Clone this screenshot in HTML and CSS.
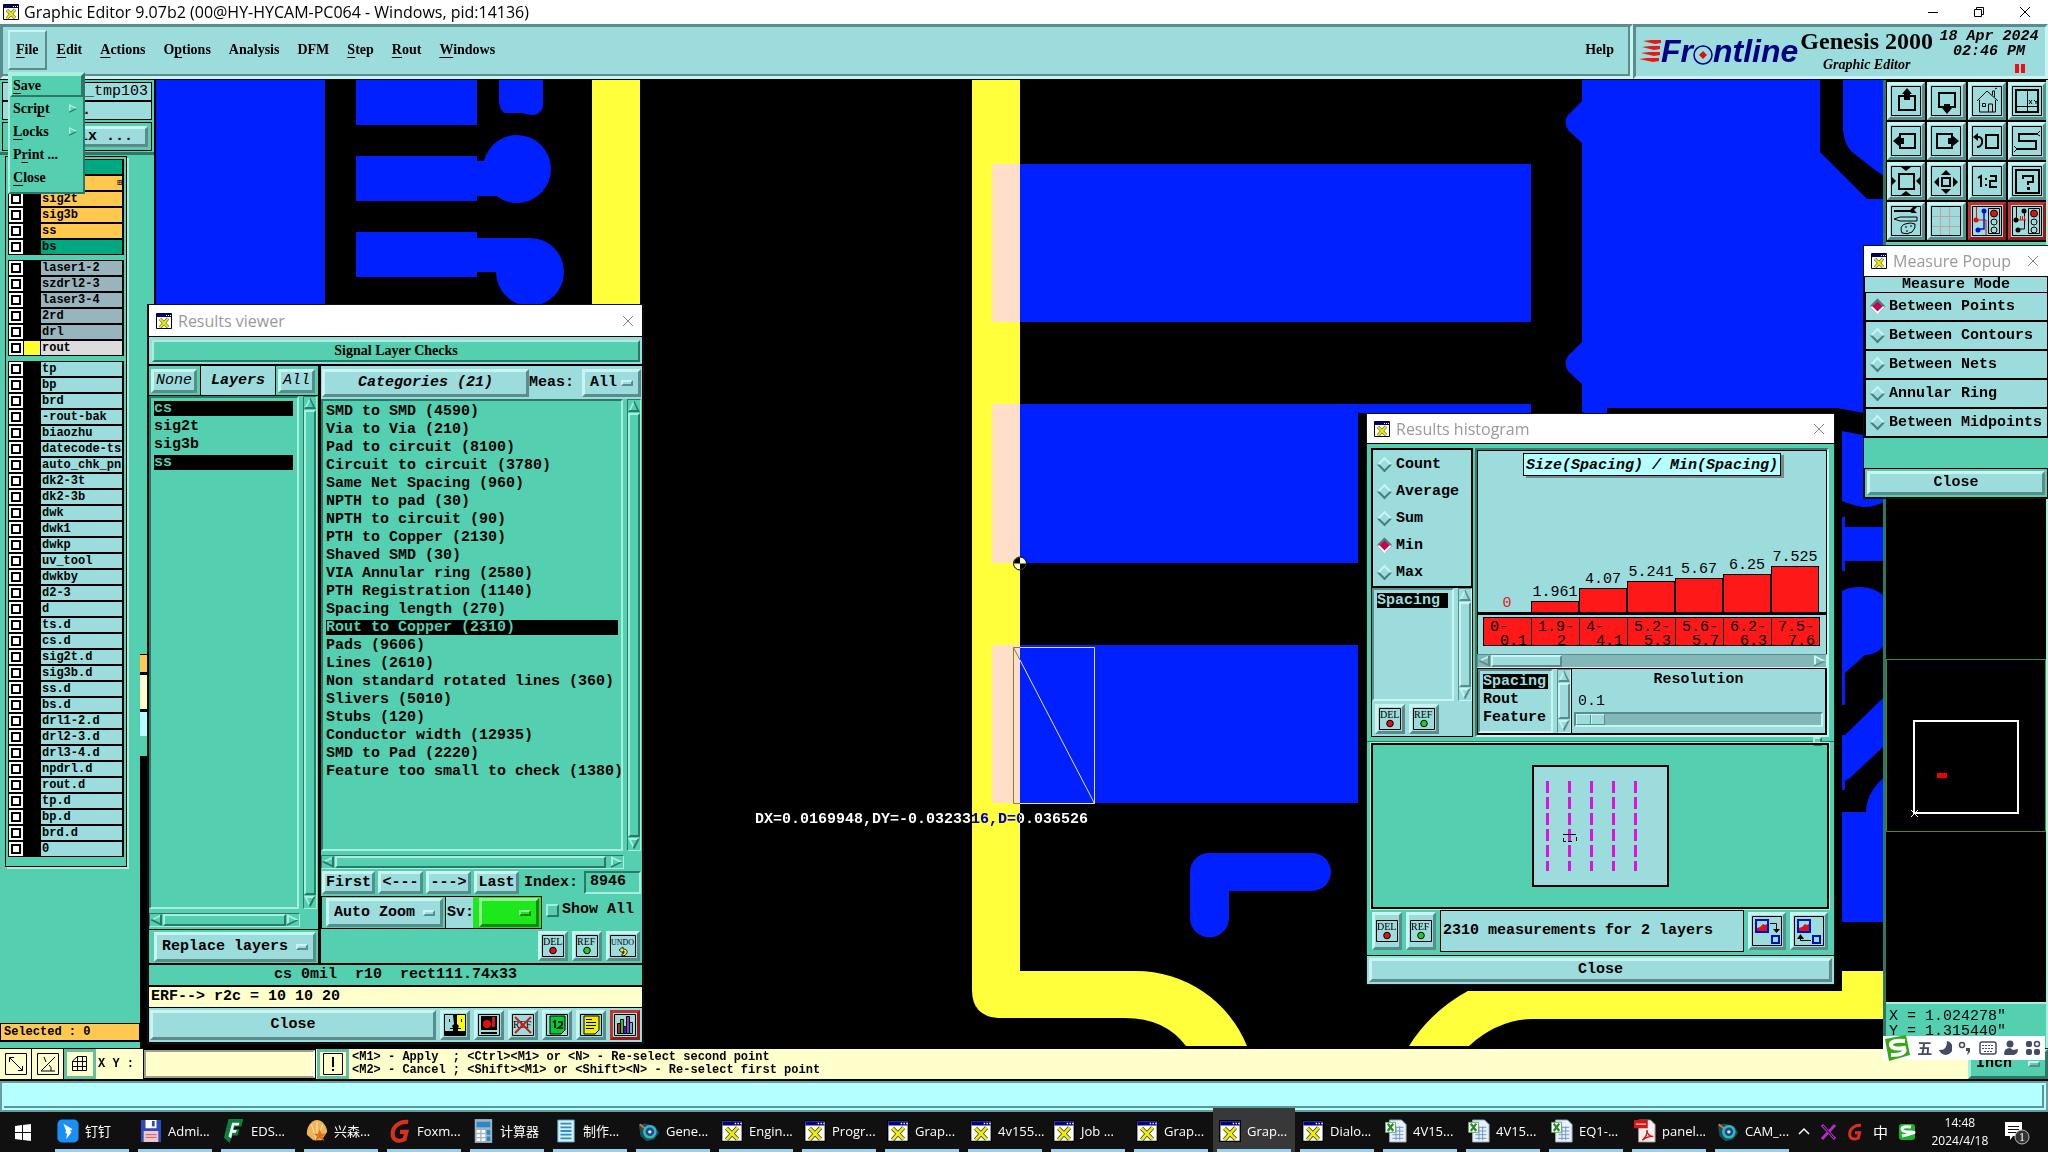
FILE: index.html
```html
<!DOCTYPE html>
<html lang="en">
<head>
<meta charset="utf-8">
<title>Graphic Editor 9.07b2</title>
<link rel="stylesheet" href="styles.css">
</head>
<body>
<svg class="defs" width="0" height="0" aria-hidden="true">
  <symbol id="winx" viewBox="0 0 16 16"><path fill="#fff" stroke="#000" d="M.5.5h15v15H.5z"/><path fill="#000080" d="M1 1h14v3H1z"/><path fill="#fff" d="M10 2h1v1h-1zM12 2h1v1h-1zM14 2h1v1h-1z"/><path stroke="#333" stroke-width="3" d="M4 6l8 8M12 5.500l-8 9"/><path stroke="#ee0" stroke-width="2" d="M4 6l8 8M12 5.500l-8 9"/></symbol>
  <symbol id="up" viewBox="0 0 12 12"><path class="tl" d="M6 0L0 12H2L6 3z"/><path class="td" d="M6 0l6 12H0l1.500-2H9L5.500 2z"/></symbol>
  <symbol id="down" viewBox="0 0 12 12"><path class="tl" d="M0 0h12l-1 2H3l4 8-1 2z"/><path class="td" d="M12 0L6 12 5 9l4.500-8z"/></symbol>
  <symbol id="left" viewBox="0 0 12 12"><path class="tl" d="M0 6L12 0v2L3 6z"/><path class="td" d="M0 6l12 6V0l-2 1v8L2 5z"/></symbol>
  <symbol id="right" viewBox="0 0 12 12"><path class="tl" d="M0 0l12 6-2 1-8-4v8l-2 1z"/><path class="td" d="M12 6L0 12v-2l9-4z"/></symbol>
  <symbol id="del" viewBox="0 0 22 22"><path fill="none" stroke="#000" d="M.5.500h21v21H.5z"/><text x="1" y="10" font-size="10">DEL</text><circle cx="11" cy="15.500" r="3.300" fill="#e01010" stroke="#000"/></symbol>
  <symbol id="ref" viewBox="0 0 22 22"><path fill="none" stroke="#000" d="M.5.500h21v21H.5z"/><text x="1" y="10" font-size="10">REF</text><circle cx="11" cy="15.500" r="3.300" fill="#2c2" stroke="#000"/></symbol>
  <symbol id="excel" viewBox="0 0 24 26"><path fill="#e8f0fa" stroke="#9ab" d="M5 1h13l5 5v19H5z"/><path fill="none" stroke="#6b90c8" d="M8 9h12M8 13h12M8 17h12M8 21h12M12 8v15M16 8v15"/><path fill="#fff" stroke="#5a5" d="M.5 3.500h11v11H.5z"/><path stroke="#2a8a30" stroke-width="2.500" d="M3 5l6 8M9 5l-6 8"/></symbol>
  <symbol id="gen" viewBox="0 0 26 26"><path fill="#17525c" d="M1 6l7-2 12 3 5 8-6 8-9 2-7-6z"/><circle cx="14" cy="14" r="8" fill="#39b8b8"/><circle cx="14" cy="14" r="5" fill="#1a4a9a"/><circle cx="14" cy="14" r="2" fill="#e8f0c0"/><path stroke="#e07030" stroke-width="2" d="M2 5l6 5"/></symbol>
  <symbol id="fox" viewBox="0 0 24 26"><path fill="none" stroke="#d8301c" stroke-width="4.500" d="M21 3C12 2 4 8 4 16s7 9 13 6l2-8h-7"/></symbol>
</svg>

<header class="titlebar">
  <svg class="ico16"><use href="#winx"/></svg>
  <h1>Graphic Editor 9.07b2 (00@HY-HYCAM-PC064 - Windows, pid:14136)</h1>
  <div class="wincontrols">
    <button aria-label="Minimize"><svg width="12" height="12"><path stroke="#000" d="M1 6.500h10"/></svg></button>
    <button aria-label="Restore"><svg width="12" height="12" fill="none" stroke="#000"><path d="M1.500 3.500h7v7h-7zM3.500 3V1.500h7v7H9"/></svg></button>
    <button aria-label="Close window"><svg width="12" height="12"><path stroke="#000" d="M1 1l10 10M11 1L1 11"/></svg></button>
  </div>
</header>

<div class="top">
  <nav class="menubar">
    <button class="open"><u>F</u>ile</button><button><u>E</u>dit</button><button><u>A</u>ctions</button><button>O<u>p</u>tions</button><button>Analysis</button><button>DFM</button><button><u>S</u>tep</button><button><u>R</u>out</button><button><u>W</u>indows</button>
    <button class="help">Help</button>
  </nav>
  <div class="brand">
    <div class="logo" aria-label="Frontline">
      <svg width="22" height="24" fill="#e81818"><path d="M4 2l8-1h10v3l-6 1zM3 8l8-1h10v3l-6 1zM2 14l8-1h11v3l-6 1zM0 20l8-1h12v3l-6 1z"/></svg><span>Fr</span><svg class="o" width="20" height="20"><circle cx="10" cy="10" r="9" fill="none" stroke="#000080" stroke-width="1.500"/><path fill="#e01010" d="M10 6l4 4-4 4-4-4z"/></svg><span>ntline</span>
    </div>
    <div class="product"><strong>Genesis 2000</strong><em>Graphic Editor</em></div>
    <div class="clock"><span>18 Apr 2024</span><span>02:46 PM</span><i></i></div>
  </div>
</div>

<main class="work">
  <aside class="side">
    <div class="job"><div class="jobname">y155_tmp103</div><div class="step">.</div><div class="matrix"><button class="btn">Matrix ...</button></div></div>
    <div class="layers">
      <ul>
        <li class="grn"><label><input type="checkbox"><i></i><span>&nbsp;</span></label></li>
        <li class="org"><label><input type="checkbox"><i></i><span class="mark">⊞</span></label></li>
        <li class="org"><label><input type="checkbox"><i></i><span>sig2t</span></label></li>
        <li class="org"><label><input type="checkbox"><i></i><span>sig3b</span></label></li>
        <li class="org"><label><input type="checkbox"><i></i><span>ss</span></label></li>
        <li class="grn"><label><input type="checkbox"><i></i><span>bs</span></label></li>
      </ul>
      <ul>
        <li class="gry"><label><input type="checkbox"><i></i><span>laser1-2</span></label></li>
        <li class="gry"><label><input type="checkbox"><i></i><span>szdrl2-3</span></label></li>
        <li class="gry"><label><input type="checkbox"><i></i><span>laser3-4</span></label></li>
        <li class="gry"><label><input type="checkbox"><i></i><span>2rd</span></label></li>
        <li class="gry"><label><input type="checkbox"><i></i><span>drl</span></label></li>
        <li class="lit"><label><input type="checkbox"><i></i><span>rout</span></label></li>
      </ul>
      <ul>
        <li><label><input type="checkbox"><i></i><span>tp</span></label></li>
        <li><label><input type="checkbox"><i></i><span>bp</span></label></li>
        <li><label><input type="checkbox"><i></i><span>brd</span></label></li>
        <li><label><input type="checkbox"><i></i><span>-rout-bak</span></label></li>
        <li><label><input type="checkbox"><i></i><span>biaozhu</span></label></li>
        <li><label><input type="checkbox"><i></i><span>datecode-ts</span></label></li>
        <li><label><input type="checkbox"><i></i><span>auto_chk_pnl</span></label></li>
        <li><label><input type="checkbox"><i></i><span>dk2-3t</span></label></li>
        <li><label><input type="checkbox"><i></i><span>dk2-3b</span></label></li>
        <li><label><input type="checkbox"><i></i><span>dwk</span></label></li>
        <li><label><input type="checkbox"><i></i><span>dwk1</span></label></li>
        <li><label><input type="checkbox"><i></i><span>dwkp</span></label></li>
        <li><label><input type="checkbox"><i></i><span>uv_tool</span></label></li>
        <li><label><input type="checkbox"><i></i><span>dwkby</span></label></li>
        <li><label><input type="checkbox"><i></i><span>d2-3</span></label></li>
        <li><label><input type="checkbox"><i></i><span>d</span></label></li>
        <li><label><input type="checkbox"><i></i><span>ts.d</span></label></li>
        <li><label><input type="checkbox"><i></i><span>cs.d</span></label></li>
        <li><label><input type="checkbox"><i></i><span>sig2t.d</span></label></li>
        <li><label><input type="checkbox"><i></i><span>sig3b.d</span></label></li>
        <li><label><input type="checkbox"><i></i><span>ss.d</span></label></li>
        <li><label><input type="checkbox"><i></i><span>bs.d</span></label></li>
        <li><label><input type="checkbox"><i></i><span>drl1-2.d</span></label></li>
        <li><label><input type="checkbox"><i></i><span>drl2-3.d</span></label></li>
        <li><label><input type="checkbox"><i></i><span>drl3-4.d</span></label></li>
        <li><label><input type="checkbox"><i></i><span>npdrl.d</span></label></li>
        <li><label><input type="checkbox"><i></i><span>rout.d</span></label></li>
        <li><label><input type="checkbox"><i></i><span>tp.d</span></label></li>
        <li><label><input type="checkbox"><i></i><span>bp.d</span></label></li>
        <li><label><input type="checkbox"><i></i><span>brd.d</span></label></li>
        <li><label><input type="checkbox"><i></i><span>0</span></label></li>
      </ul>
    </div>
    <div class="selected">Selected : 0</div>
    <div class="peek"><i></i><b></b><s></s><em></em></div>
  </aside>

  <svg class="board" role="img" aria-label="Board view"><g transform="translate(-156 -80)">
    <g fill="#0020ff">
      <path d="M156 80h169v230H156zM356 80h121v45H356zM356 156h121v5h20v35h-20v5H356zM356 232h121v6h53a34 34 0 1 1-34 34h-19v5H356zM499 80h44v26q-1 7-9 9-7 0-12-2h-18q-5-5-5-12z"/>
      <circle cx="517" cy="169" r="34"/>
      <path d="M1020 164h511v158h-511zM1020 404h511v159h-511zM1020 645h511v158h-511z"/>
      <path d="M1209 853h103a19 19 0 0 1 0 38h-83v27a19.500 19.500 0 0 1-39 0v-46a19 19 0 0 1 19-19z"/>
      <path d="M1582 80h302v340h-277l-25-8v-28l-14-13q-5-8 0-15l14-14V143l-14-13q-5-8 0-15l14-14z"/>
      <path d="M1842 431l20 4h22v67q-10 5-20 5-10-1-22-6zM1842 517h3v10h38v34h-38v10h-3zM1842 591c10-6 30-6 41 4v52q-8 8-18 8l-20 18v32h-3zM1842 735h3l38-37v49l-33 31-5 3v9h-3zM1842 812h24q0-18 17-34v144h-41z"/>
    </g>
    <path d="M1607 408h230l27 5 20 1v17h-22l-22-5H1607z"/>
    <path d="M1820 80h23v50q1 14 9 22l23 18 9 6v23h-17l-47-47z"/>
    <path fill="#ffff3c" d="M592 80h48v230h-48zM972 80h48v891h116a120 120 0 0 1 111 75h-61q-21-28-61-28H998q-26-2-26-28zM1409 1046q35-56 111-75h364v48h-354q-34 2-61 27z"/>
    <path fill="#ffdfc8" d="M992 164h28v158h-28zM992 404h28v159h-28zM992 645h28v158h-28z"/>
    <path fill="none" stroke="#e8e0b0" d="M1020 647.500h74.500v156H1020M1020 660l74.500 143.500"/>
    <path fill="none" stroke="#907840" d="M1020 647.500h-6.500v156h6.500M1013.500 647.500L1020 660"/>
    <circle cx="1020" cy="563.500" r="6.500" fill="#ffffc8" stroke="#000"/><path d="M1020 563.500v-6a6 6 0 0 0-6 6zM1020 563.500h6a6 6 0 0 1-6 6z"/>
    <path d="M1358 413h484v578h-484zM140 1037h508v11H140z"/>
    <text class="dist" x="755" y="823">DX=0.0169948,DY=-0.0323316,D=0.036526</text>
  </g></svg>

  <aside class="tools">
    <div class="toolgrid">
      <button class="btn" aria-label="Pan up"><svg viewBox="0 0 30 30"><path class="f" d="M.5.500h29v29H.5z"/><path class="w" d="M8 10h16v14H8z"/><path d="M16 2l5 6h-2v6h-6V8h-2z"/></svg></button>
      <button class="btn" aria-label="Pan down"><svg viewBox="0 0 30 30"><path class="f" d="M.5.500h29v29H.5z"/><path class="w" d="M8 7h16v14H8z"/><path d="M16 28l5-6h-2v-4h-6v4h-2z"/></svg></button>
      <button class="btn" aria-label="Home"><svg viewBox="0 0 30 30"><path class="f" d="M.5.500h29v29H.5zM5 15L15 5l11 10M7.500 14v12h16V14M10.500 17.500h3v3h-3zM16.500 26v-8h4v8M20.500 9V5h2v6M23 3l2-1"/></svg></button>
      <button class="btn" aria-label="Coordinates"><svg viewBox="0 0 30 30"><path class="f" d="M.5.500h29v29H.5zM15.500 3v24M4 20.500h22M17 14l3 4M20 14l-3 4M22 14l2 2 2-2M24 16v2"/><path class="w" d="M4 4h22v22H4z"/></svg></button>
      <button class="btn" aria-label="Pan left"><svg viewBox="0 0 30 30"><path class="f" d="M.5.500h29v29H.5z"/><path class="w" d="M9 8h15v14H9z"/><path d="M2 15l6-5v2h5v6H8v2z"/></svg></button>
      <button class="btn" aria-label="Pan right"><svg viewBox="0 0 30 30"><path class="f" d="M.5.500h29v29H.5z"/><path class="w" d="M6 8h15v14H6z"/><path d="M28 15l-6-5v2h-5v6h5v2z"/></svg></button>
      <button class="btn" aria-label="Previous view"><svg viewBox="0 0 30 30"><path class="f" d="M.5.500h29v29H.5z"/><path class="w" d="M14 9h12v13H14zM4 11h3q4 1 3 6-1 4-5 4"/><path d="M1 11l5-4v8z"/></svg></button>
      <button class="btn" aria-label="Snake path"><svg viewBox="0 0 30 30"><path class="f" d="M.5.500h29v29H.5zM25 8l3-3M25 8l3 2M5 23l-3-3M5 23l-3 3"/><path class="w" d="M25 8H7v7h17v8H5"/></svg></button>
      <button class="btn" aria-label="Zoom in"><svg viewBox="0 0 30 30"><path class="f" d="M.5.500h29v29H.5z"/><path class="w" d="M8 8h15v15H8z"/><path d="M15 5l-5-4h10zM15 25l-5 4h10zM5 15l-5-5v10zM25 15l5-5v10z"/></svg></button>
      <button class="btn" aria-label="Zoom out"><svg viewBox="0 0 30 30"><path class="f" d="M.5.500h29v29H.5z"/><path class="w" d="M11 12h8v8h-8z"/><path d="M15 4l5 5H10zM15 28l5-5H10zM3 16l5-5v10zM27 16l-5-5v10z"/></svg></button>
      <button class="btn" aria-label="Zoom factor"><svg viewBox="0 0 30 30"><path class="f" d="M.5.500h29v29H.5z"/><path class="w" d="M6 12l3-2v11M18 10h6v5h-6v6h7"/><path d="M13 12h2v2h-2zM13 18h2v2h-2z"/></svg></button>
      <button class="btn" aria-label="Query"><svg viewBox="0 0 30 30"><path class="f" d="M.5.500h29v29H.5z"/><path class="w" d="M4 4h23v23H4zM11 13v-3h10v6h-5v3"/><path d="M15 21h3v3h-3z"/></svg></button>
      <button class="btn" aria-label="Setup"><svg viewBox="0 0 30 30"><path class="f" d="M.5.500h29v29H.5zM3 13l6-2h17v4H9zM11 27q-3-7 3-9t10 0q1 4-3 8-5 3-10 1zM14 21h2M19 20h2M15 25h2"/><path d="M3 4h16l3-3h4l-3 3 3 3h-5l-2-1H3z"/></svg></button>
      <button class="btn" aria-label="Grid"><svg viewBox="0 0 30 30"><path class="f" d="M.5.500h29v29H.5z"/><path fill="none" stroke="#c8a0a0" d="M1 10.500h28M1 20.500h28M9.500 1v28M18.500 1v28"/></svg></button>
      <button class="btn red" aria-label="Highlight nets"><svg viewBox="0 0 30 30"><path class="f" d="M.5.500h29v29H.5zM16.500 2.500h11v25h-11z"/><path fill="none" stroke="#e01010" d="M4.500 1v13M4 14h10v15"/><path fill="none" stroke="#0010e0" stroke-width="1.500" d="M12 5v18H7"/><circle cx="4" cy="14" r="2.500" fill="#e01010"/><circle cx="12" cy="5" r="2.500" fill="#0010e0"/><circle cx="6" cy="24" r="2.500" fill="#0010e0"/><circle cx="22" cy="7.500" r="3.500" fill="#e01010" stroke="#000"/><circle cx="22" cy="16" r="3" class="f"/><circle cx="22" cy="24" r="3" class="f"/></svg></button>
      <button class="btn red" aria-label="Check nets"><svg viewBox="0 0 30 30"><path class="f" d="M.5.500h29v29H.5zM16.500 2.500h11v25h-11zM4.500 1v13M12.500 5v18H7"/><path fill="none" stroke="#e01010" d="M6 14h8M8.500 14v-4M10.500 14v-4M12.500 14v-4"/><circle cx="4" cy="14" r="2.500"/><circle cx="12" cy="5" r="2.500"/><circle cx="6" cy="24" r="2.500"/><circle cx="22" cy="7.500" r="3.500" fill="#e01010" stroke="#000"/><circle cx="22" cy="16" r="3" class="f"/><circle cx="22" cy="24" r="3" class="f"/></svg></button>
    </div>
    <svg class="overview" role="img" aria-label="Overview"><g transform="translate(-1886 -247)"><path fill="none" stroke="#4c8c28" d="M1886.500 659.500h159v172h-159z"/><path fill="none" stroke="#fff" stroke-width="2" d="M1914 721h104v92h-104z"/><path fill="#e00" d="M1937 773h10v5h-10z"/><path stroke="#fff" d="M1911 810l7 7M1918 810l-7 7"/></g></svg>
    <div class="coords"><span>X = 1.024278"</span><span>Y = 1.315440"</span></div>
  </aside>
</main>

<section class="command">
  <button aria-label="Two points"><svg width="22" height="22"><path fill="none" stroke="#000" d="M.5.500h21v21H.5zM5 5l12 12M4.500 9V4.500H9M13 17.500h4.500V13"/></svg></button>
  <button aria-label="Angle"><svg width="22" height="22"><path fill="none" stroke="#000" d="M.5.500h21v21H.5zM18 4L4 18h14M7 4l2 5M12 12q3 2 2 6"/></svg></button>
  <button class="on" aria-label="Grid snap"><svg width="22" height="22"><path fill="none" stroke="#000" d="M3.500 17.500V8l5-4.500h9v14zM3 8.500h15M3 13.500h15M8.500 3v15M13.500 3v15"/></svg></button>
  <label for="xy">X Y :</label>
  <input id="xy" type="text">
  <button class="on bang" aria-label="Execute"><svg width="20" height="22"><path fill="none" stroke="#000" d="M.5.500h19v21H.5z"/><path d="M9 4h2v10H9zM9 16h2v2H9z"/></svg></button>
  <p>&lt;M1&gt; - Apply&nbsp; ; &lt;Ctrl&gt;&lt;M1&gt; or &lt;N&gt; - Re-select second point<br>&lt;M2&gt; - Cancel ; &lt;Shift&gt;&lt;M1&gt; or &lt;Shift&gt;&lt;N&gt; - Re-select first point</p>
  <div class="units"><select aria-label="Units"><option>Inch</option></select><i class="nub"></i></div>
</section>
<div class="status"><i></i></div>

<footer class="taskbar">
  <button class="start" aria-label="Start"><svg width="18" height="18" fill="#fff"><path d="M1 3l7-1v7H1zM9 2l8-1v8H9zM1 10h7v7l-7-1zM9 10h8v8l-8-1z"/></svg></button>
  <button class="task"><svg viewBox="0 0 24 26"><rect width="23" height="25" x=".5" y=".5" rx="5" fill="#1890f8"/><path fill="#fff" d="M7 5l10 6-3 2 2 1-6 8 1-6-2-1 1-2z"/></svg>钉钉</button>
  <button class="task"><svg viewBox="0 0 24 26"><path fill="#3048b8" d="M1 1h22v24H1z"/><path fill="#fff" d="M6 1h12v9H6z"/><path fill="#3048b8" d="M13 2h3v6h-3z"/><path fill="#ecc8cc" d="M4 13h16v12H4z"/><path stroke="#c55" d="M6 17h12M6 20h12"/></svg>Admi...</button>
  <button class="task"><svg viewBox="0 0 24 26"><path fill="#0c8038" d="M6 0h16l-2 8h-7l-1 3h6l-2 7h-6l-3 8-6-6z"/><path fill="#fff" d="M10 4h8l-1 3h-5l-1 5h4l-1 3h-4l-1 6-3-2z"/></svg>EDS...</button>
  <button class="task"><svg viewBox="0 0 24 26"><path fill="#f0b458" d="M12 1c6 0 11 7 11 13l-6 9H8L1 17C0 9 6 1 12 1z"/><path stroke="#fff0c0" fill="none" d="M12 3v18M6 6l5 16M18 6l-5 16"/><path fill="#e07020" d="M15 11l2 5h5l-4 3 2 5-5-3-5 3 2-5-4-3h5z"/></svg>兴森...</button>
  <button class="task"><svg><use href="#fox"/></svg>Foxm...</button>
  <button class="task"><svg viewBox="0 0 24 26"><path fill="#9fb4c4" d="M3 0h19v26H3z"/><path fill="#2a88c8" d="M5 3h15v6H5zM16 12h4v5h-4zM16 19h4v5h-4z"/><path fill="#fff" d="M5 12h4v3H5zM10.500 12h4v3h-4zM5 16.500h4v3H5zM10.500 16.500h4v3h-4zM5 21h4v3H5zM10.500 21h4v3h-4z"/></svg>计算器</button>
  <button class="task"><svg viewBox="0 0 24 26"><path fill="#d8f0fa" stroke="#4a9ac0" d="M3 1h18v24H3z"/><path stroke="#2a90c8" stroke-width="2" d="M6 5h12M6 9h12M6 13h12M6 17h12M6 21h12"/></svg>制作...</button>
  <button class="task"><svg><use href="#gen"/></svg>Gene...</button>
  <button class="task"><svg><use href="#winx"/></svg>Engin...</button>
  <button class="task"><svg><use href="#winx"/></svg>Progr...</button>
  <button class="task"><svg><use href="#winx"/></svg>Grap...</button>
  <button class="task"><svg><use href="#winx"/></svg>4v155...</button>
  <button class="task"><svg><use href="#winx"/></svg>Job ...</button>
  <button class="task"><svg><use href="#winx"/></svg>Grap...</button>
  <button class="task active"><svg><use href="#winx"/></svg>Grap...</button>
  <button class="task"><svg><use href="#winx"/></svg>Dialo...</button>
  <button class="task"><svg><use href="#excel"/></svg>4V15...</button>
  <button class="task"><svg><use href="#excel"/></svg>4V15...</button>
  <button class="task"><svg><use href="#excel"/></svg>EQ1-...</button>
  <button class="task"><svg viewBox="0 0 24 26"><path fill="#f4f0f0" stroke="#b88" d="M5 1h13l5 5v19H5z"/><path fill="#d01818" d="M0 1h15v9H0z"/><path fill="none" stroke="#d01818" stroke-width="1.500" d="M9 23q6-5 5-11 1 7 7 7-6-1-12 4"/><path stroke="#fff" d="M2 5.500h11"/></svg>panel...</button>
  <button class="task"><svg><use href="#gen"/></svg>CAM_...</button>
  <div class="tray">
    <svg width="12" height="12"><path fill="none" stroke="#fff" stroke-width="1.500" d="M1 8l5-5 5 5"/></svg>
    <svg width="18" height="18"><path stroke="#b030c0" stroke-width="3" d="M2 2l13 14M15 2L2 16"/><path stroke="#000" d="M3 3l11 12"/></svg>
    <svg width="16" height="18"><use href="#fox"/></svg>
    <span class="zh">中</span>
    <svg width="18" height="18"><rect width="16" height="16" x="1" y="1" rx="3" fill="#20b030"/><path fill="none" stroke="#fff" stroke-width="3" d="M13 4q-9-1-9 2t9 3-9 4"/></svg>
    <time><span>14:48</span><span>2024/4/18</span></time>
    <svg class="note" width="26" height="28"><path fill="#fff" d="M1 4h17v14h-9l-3 4v-4H1z"/><path stroke="#111" d="M4 8.500h11M4 11.500h11M4 14.500h11"/><circle cx="18" cy="19" r="7" fill="#333" stroke="#bbb"/><text x="15" y="23" fill="#fff" font-size="12">1</text></svg>
  </div>
</footer>

<div class="filemenu" role="menu">
  <button role="menuitem" class="hot"><u>S</u>ave</button>
  <button role="menuitem">Scri<u>p</u>t<svg width="9" height="13"><use href="#right"/></svg></button>
  <button role="menuitem"><u>L</u>ocks<svg width="9" height="13"><use href="#right"/></svg></button>
  <button role="menuitem">P<u>r</u>int ...</button>
  <button role="menuitem"><u>C</u>lose</button>
</div>

<section class="window results">
  <header><svg class="ico16"><use href="#winx"/></svg><h2>Results viewer</h2><button aria-label="Close results viewer"><svg width="12" height="12"><path stroke="#888" d="M1 1l10 10M11 1L1 11"/></svg></button></header>
  <div class="checkwrap"><button class="check">Signal Layer Checks</button></div>
  <div class="cols">
    <div class="lcol">
      <div class="lhead"><span class="cell"><button class="btn it">None</button></span><strong>Layers</strong><span class="cell"><button class="btn it">All</button></span></div>
      <div class="scrollbox"><ul class="list"><li class="sel">cs</li><li>sig2t</li><li>sig3b</li><li class="sel">ss</li></ul><div class="vbar"><svg><use href="#up"/></svg><i></i><svg><use href="#down"/></svg></div></div>
      <div class="hbar"><svg><use href="#left"/></svg><i></i><svg><use href="#right"/></svg></div>
      <div class="replace"><span class="drop"><select aria-label="Layer mode"><option>Replace layers</option></select><i class="nub"></i></span></div>
    </div>
    <div class="rcol">
      <div class="rhead"><button class="btn cat">Categories (21)</button><label for="meas">Meas:</label><span class="drop"><select id="meas"><option>All</option></select><i class="nub"></i></span></div>
      <div class="scrollbox"><ul class="list">
        <li>SMD to SMD (4590)</li><li>Via to Via (210)</li><li>Pad to circuit (8100)</li><li>Circuit to circuit (3780)</li><li>Same Net Spacing (960)</li><li>NPTH to pad (30)</li><li>NPTH to circuit (90)</li><li>PTH to Copper (2130)</li><li>Shaved SMD (30)</li><li>VIA Annular ring (2580)</li><li>PTH Registration (1140)</li><li>Spacing length (270)</li><li class="sel">Rout to Copper (2310)</li><li>Pads (9606)</li><li>Lines (2610)</li><li>Non standard rotated lines (360)</li><li>Slivers (5010)</li><li>Stubs (120)</li><li>Conductor width (12935)</li><li>SMD to Pad (2220)</li><li>Feature too small to check (1380)</li>
      </ul><div class="vbar"><svg><use href="#up"/></svg><i></i><svg><use href="#down"/></svg></div></div>
      <div class="hbar"><svg><use href="#left"/></svg><i></i><svg><use href="#right"/></svg></div>
      <div class="navrow"><button class="btn">First</button><button class="btn">&lt;---</button><button class="btn">---&gt;</button><button class="btn">Last</button><label for="idx">Index:</label><input id="idx" type="text" value="8946"></div>
      <div class="zoomrow"><div class="zbox"><span class="drop az"><select aria-label="Zoom mode"><option>Auto Zoom</option></select><i class="nub"></i></span><label for="sv">Sv:</label><span class="green"><span class="drop"><select id="sv"><option></option></select><i class="nub"></i></span></span></div><label class="show"><input type="checkbox">Show All</label></div>
      <div class="actrow"><button class="btn ib" aria-label="Delete"><svg class="i22"><use href="#del"/></svg></button><button class="btn ib" aria-label="Reference"><svg class="i22"><use href="#ref"/></svg></button><button class="btn ub" aria-label="Undo"><svg width="26" height="22"><path fill="none" stroke="#000" d="M.5.500h25v21H.5z"/><text x="1" y="10" font-size="8">UNDO</text><path fill="#ee4" stroke="#000" stroke-width=".8" d="M9 15l4-3v2q5 0 4 4-1 3-5 3v-2q3 0 2-3h-1v2z"/></svg></button></div>
    </div>
  </div>
  <div class="feat">cs 0mil&nbsp; r10&nbsp; rect111.74x33</div>
  <div class="erf">ERF--&gt; r2c = 10 10 20</div>
  <div class="foot"><button class="btn wide">Close</button>
    <button class="btn ib" aria-label="Compare"><svg class="i22" viewBox="0 0 22 22"><path fill="#9cdcdc" stroke="#000" d="M.5.500h21v21H.5z"/><path fill="#ff0" d="M12 1h9v16h-9z"/><path d="M9 1h4v9l2 2-1 2v3h7v4H1v-4h8v-3l-1-2 2-2zM5 5h1v3H5zM17 5h1v3h-1zM6 14h3v1H6zM14 14h3v1h-3z"/></svg></button>
    <button class="btn ib" aria-label="Record"><svg class="i22" viewBox="0 0 22 22"><path fill="#9cdcdc" stroke="#000" d="M.5.500h21v21H.5z"/><path d="M3 2h16v14H3zM3 18h16v2H3z"/><path fill="#e01010" d="M14 3h3v10h-3z"/><circle cx="9" cy="10" r="4" fill="#e01010"/></svg></button>
    <button class="btn ib" aria-label="Clear reference"><svg class="i22" viewBox="0 0 22 22"><path fill="none" stroke="#000" d="M.5.500h21v21H.5z"/><text x="1" y="14" font-size="10">REF</text><path stroke="#d01818" stroke-width="2" d="M3 3l16 16M19 3L3 19"/></svg></button>
    <button class="btn ib" aria-label="Count"><svg class="i22" viewBox="0 0 22 22"><path fill="none" stroke="#000" d="M.5.500h21v21H.5z"/><path fill="#0c3" stroke="#000" d="M4 2h15v14l-4 4H4z"/><path fill="none" stroke="#000" stroke-width="1.500" d="M7 8l2-1v7M12 8h4v3l-4 3h5"/></svg></button>
    <button class="btn ib" aria-label="Notes"><svg class="i22" viewBox="0 0 22 22"><path fill="none" stroke="#000" d="M.5.500h21v21H.5z"/><path fill="#ee0" stroke="#000" d="M4 2h15v14l-4 4H4z"/><path stroke="#000" d="M6 5.500h6M6 8.500h10M6 11.500h10M6 14.500h8"/></svg></button>
    <button class="btn ib red" aria-label="Histogram"><svg class="i22" viewBox="0 0 22 22"><path fill="#9cdcdc" stroke="#000" d="M.5.500h21v21H.5z"/><path fill="#c02020" stroke="#000" d="M3.500 9.500h3v10h-3z"/><path fill="#2c2" stroke="#000" d="M6.500 5.500h3v14h-3z"/><path fill="#22c" stroke="#000" d="M9.500 12.500h3v7h-3z"/><path fill="#c2c" stroke="#000" d="M12.500 2.500h3v17h-3z"/><path fill="#4cc" stroke="#000" d="M15.500 8.500h3v11h-3z"/></svg></button>
  </div>
</section>

<section class="window histo">
  <header><svg class="ico16"><use href="#winx"/></svg><h2>Results histogram</h2><button aria-label="Close results histogram"><svg width="12" height="12"><path stroke="#888" d="M1 1l10 10M11 1L1 11"/></svg></button></header>
  <div class="hbody">
    <div class="hleft">
      <fieldset><label><input type="radio" name="agg">Count</label><label><input type="radio" name="agg">Average</label><label><input type="radio" name="agg">Sum</label><label><input type="radio" name="agg" checked>Min</label><label><input type="radio" name="agg">Max</label></fieldset>
      <div class="scrollbox"><ul class="list"><li class="sel">Spacing</li></ul><div class="vbar"><svg><use href="#up"/></svg><i></i><svg><use href="#down"/></svg></div></div>
      <div class="hbtns"><button class="btn ib" aria-label="Delete"><svg class="i22"><use href="#del"/></svg></button><button class="btn ib" aria-label="Reference"><svg class="i22"><use href="#ref"/></svg></button></div>
    </div>
    <div class="hright">
      <div class="chart">
        <div class="ctitle">Size(Spacing) / Min(Spacing)</div>
        <div class="bars">
          <div class="zero">0</div>
          <div>1.961<i style="height:11px"></i></div>
          <div>4.07<i style="height:24px"></i></div>
          <div>5.241<i style="height:31px"></i></div>
          <div>5.67<i style="height:34px"></i></div>
          <div>6.25<i style="height:38px"></i></div>
          <div>7.525<i style="height:46px"></i></div>
        </div>
        <div class="ranges"><div>0-<b>0.1</b></div><div>1.9-<b>2&nbsp;</b></div><div>4-<b>4.1</b></div><div>5.2-<b>5.3</b></div><div>5.6-<b>5.7</b></div><div>6.2-<b>6.3</b></div><div>7.5-<b>7.6</b></div></div>
      </div>
      <div class="hbar cy"><svg><use href="#left"/></svg><i></i><svg><use href="#right"/></svg></div>
      <div class="lower">
        <div class="scrollbox"><ul class="list"><li class="sel">Spacing</li><li>Rout</li><li>Feature</li></ul><div class="vbar"><svg><use href="#up"/></svg><i></i><svg><use href="#down"/></svg></div></div>
        <div class="res"><label for="resol">Resolution</label><output for="resol">0.1</output><input id="resol" type="range" min="0" max="100" value="0"></div>
      </div>
    </div>
  </div>
  <div class="sash"><i></i></div>
  <div class="map"><svg width="137" height="122"><path fill="#9cdcdc" stroke="#000" stroke-width="2" d="M1 1h135v120H1z"/><path stroke="#e010e0" stroke-width="3" stroke-dasharray="12 4" d="M15.500 16v90M37.500 16v90M59.500 16v90M81.500 16v90M103.500 16v90"/><path fill="none" stroke="#000" d="M31 69.500h13M31.500 73v3.500H34M36 76.500h4M44.500 72v4"/></svg></div>
  <div class="mrow"><button class="btn tall" aria-label="Delete"><svg class="i22"><use href="#del"/></svg></button><button class="btn tall" aria-label="Reference"><svg class="i22"><use href="#ref"/></svg></button><div class="msg">2310 measurements for 2 layers</div>
    <button class="btn sq" aria-label="Detach"><svg width="30" height="30"><path fill="none" stroke="#000" d="M.5.500h29v29H.5zM18 7.500h6.500V14"/><path d="M21 13h7l-3.500 4z"/><path fill="#e01020" stroke="#0010c0" stroke-width="2" d="M4 4h12v12H4z"/><path fill="#9cdcdc" stroke="#0010c0" stroke-width="2" d="M20 20h7v7h-7z"/><path fill="#9cdcdc" d="M5 5h10v3l-2 1-2-1-3 3-3 1z"/></svg></button>
    <button class="btn sq" aria-label="Attach"><svg width="30" height="30"><path fill="none" stroke="#000" d="M.5.500h29v29H.5zM6.500 22v2.500H17"/><path d="M3 23h7l-3.500-5z"/><path fill="#e01020" stroke="#0010c0" stroke-width="2" d="M4 4h12v12H4z"/><path fill="#9cdcdc" stroke="#0010c0" stroke-width="2" d="M19 20h7v7h-7z"/><path fill="#9cdcdc" d="M5 5h10v3l-2 1-2-1-3 3-3 1z"/></svg></button>
  </div>
  <div class="hfoot"><button class="btn">Close</button></div>
</section>

<section class="window measure">
  <header><svg class="ico16"><use href="#winx"/></svg><h2>Measure Popup</h2><button aria-label="Close measure popup"><svg width="12" height="12"><path stroke="#888" d="M1 1l10 10M11 1L1 11"/></svg></button></header>
  <fieldset><legend>Measure Mode</legend>
    <label><input type="radio" name="mode" checked>Between Points</label>
    <label><input type="radio" name="mode">Between Contours</label>
    <label><input type="radio" name="mode">Between Nets</label>
    <label><input type="radio" name="mode">Annular Ring</label>
    <label><input type="radio" name="mode">Between Midpoints</label>
  </fieldset>
  <div class="mfoot"><button class="btn">Close</button></div>
</section>

<div class="ime">
  <svg width="28" height="28"><path fill="#38a818" d="M2 5l21-4 4 20-21 6z"/><path fill="none" stroke="#fff" stroke-width="4" d="M22 7Q7 6 8 11t13 3Q24 21 8 21"/></svg>
  <span>五</span>
  <svg width="14" height="16"><path fill="#454a66" d="M9 1a7 7 0 1 1-8 9q8 1 8-9z"/></svg>
  <svg width="14" height="16"><circle cx="4" cy="5" r="2.500" fill="none" stroke="#454a66" stroke-width="1.500"/><path fill="#454a66" d="M8 8h4v4l-3 3 1-4H8z"/></svg>
  <svg width="18" height="14"><rect x="1" y="1" width="16" height="12" rx="2" fill="none" stroke="#454a66" stroke-width="1.500"/><path stroke="#454a66" stroke-dasharray="2 1" d="M3 4.500h12M3 7.500h12M5 10.500h8"/></svg>
  <svg width="16" height="16"><circle cx="7" cy="4" r="3.500" fill="#454a66"/><path fill="#454a66" d="M1 14q0-6 6-6l3 2 5-1q0 6-6 6H2z"/></svg>
  <svg width="16" height="16" fill="#454a66"><rect x="1" y="1" width="6" height="6" rx="2"/><circle cx="12" cy="4" r="2.500" fill="none" stroke="#454a66" stroke-width="1.500"/><rect x="1" y="9" width="6" height="6" rx="2"/><rect x="9" y="9" width="6" height="6" rx="2"/></svg>
</div>
</body>
</html>
```
FILE: styles.css
```css
:root {
  --cy: #9cdcdc; --cyl: #c8f4f2; --cyd: #5a8c8c;
  --te: #54d0b0; --tel: #a8f0de; --ted: #2c7866;
  --cream: #ffffcc;
  --mono: "Liberation Mono", "Courier New", monospace;
  --serif: "Liberation Serif", "Times New Roman", serif;
  --ui: "Open Sans", "Noto Sans CJK SC", sans-serif;
}
* { box-sizing: border-box; }
html, body { margin: 0; height: 100%; }
body { display: flex; flex-direction: column; position: relative; overflow: hidden; background: #000; color: #000; font: bold 15px/18px var(--mono); }
button, input, select { font: inherit; color: inherit; margin: 0; padding: 0; border: 0; background: none; border-radius: 0; }
select { appearance: none; outline: 0; }
ul { list-style: none; margin: 0; padding: 0; }
h1, h2, p { margin: 0; font: inherit; }
.defs { position: absolute; }
svg { display: block; flex: none; }
svg text { font-family: var(--serif); font-weight: normal; }
.tl { fill: var(--tel); }
.td { fill: var(--ted); }
.ico16 { width: 16px; height: 16px; }
.i22 { width: 22px; height: 22px; }

.btn { display: flex; align-items: center; justify-content: center; background: var(--cy); border: 3px solid; border-color: var(--cyl) var(--cyd) var(--cyd) var(--cyl); white-space: nowrap; }
.nub { width: 12px; height: 6px; background: var(--cy); border: 2px solid; border-color: var(--cyl) var(--cyd) var(--cyd) var(--cyl); flex: none; }
.drop { display: flex; align-items: center; background: var(--cy); border: 3px solid; border-color: var(--cyl) var(--cyd) var(--cyd) var(--cyl); padding: 0 5px; }
.drop select { flex: 1; min-width: 0; }

/* title bar and menus */
.titlebar { display: flex; align-items: center; height: 24px; flex: none; background: #fff; padding-left: 3px; gap: 5px; }
.titlebar h1 { font: 16px/22px var(--ui); }
.wincontrols { margin-left: auto; display: flex; }
.wincontrols button { width: 46px; display: flex; justify-content: center; }
.top { display: flex; height: 55px; flex: none; }
.menubar { flex: 1; display: flex; gap: 2px; background: var(--cy); border: 3px solid; border-color: var(--cyd) var(--cyl) var(--cyl) var(--cyd); padding: 3px 8px 6px 5px; font: bold 14px/18px var(--serif); }
.menubar { box-shadow: inset 0 -2px var(--cyd), inset -2px 0 var(--cyd); }
.menubar button { border: 2px solid transparent; padding: 0 6px; }
.menubar .open { border-color: var(--cyl) var(--cyd) var(--cyd) var(--cyl); }
.menubar .help { margin-left: auto; }
u { text-underline-offset: 3px; }
.brand { width: 415px; display: flex; align-items: flex-start; background: var(--cy); border: 3px solid; border-color: var(--cyd) var(--cyl) var(--cyl) var(--cyd); padding-left: 3px; }
.logo { display: flex; align-items: center; height: 44px; padding-top: 3px; font: italic bold 32px/36px "Liberation Sans", Arial, sans-serif; color: #000080; }
.logo .o { align-self: flex-end; margin-bottom: 6px; }
.product { display: flex; flex-direction: column; align-items: center; padding: 1px 0 0 2px; font-family: var(--serif); white-space: nowrap; }
.product strong { font-size: 24px; line-height: 26px; }
.product em { font-size: 14px; line-height: 22px; }
.clock { flex: 1; display: flex; flex-direction: column; align-items: center; font-style: italic; line-height: 15px; padding-top: 2px; }
.clock i { align-self: flex-end; width: 10px; height: 9px; margin: 5px 20px 0 0; border: solid #f01010; border-width: 0 4px; }

/* work area */
.work { flex: 1; min-height: 0; display: flex; border-top: 1px solid #000; }
.side { width: 156px; position: relative; display: flex; flex-direction: column; background: var(--te); border-right: 2px solid #000; }
.job { padding: 2px 2px 1px; border-bottom: 3px solid var(--ted); }
.jobname, .step { height: 19px; border: 1px solid #000; background: var(--cy); text-align: right; padding-right: 3px; line-height: 17px; }
.step { text-align: left; padding-left: 79px; }
.jobname { font-weight: normal; }
.matrix { border: 1px solid #000; margin-top: 2px; padding: 3px 3px 3px 5px; }
.matrix .btn { width: 100%; height: 21px; justify-content: flex-end; padding-right: 12px; }
.layers { align-self: flex-start; width: 122px; margin: 1px 0 0 5px; border: 1px solid #000; padding: 2px 2px 9px; display: flex; flex-direction: column; gap: 5px; font-size: 12px; line-height: 14px; box-shadow: 2px 2px var(--tel); }
.layers ul { background: #000; }
.layers li { height: 16px; padding: 1px 2px 1px 1px; }
.layers label { display: flex; height: 14px; }
.layers input { appearance: none; width: 14px; height: 14px; border: 2px solid #fff; background: #fff; box-shadow: inset 0 0 0 2px #000; }
.layers i { width: 16px; margin: 0 1px; background: #000; }
.layers span { flex: 1; min-width: 0; overflow: hidden; white-space: nowrap; background: var(--cy); padding-left: 1px; }
.layers .grn span { background: #00a880; }
.layers .org span { background: #ffc850; }
.layers .gry span { background: #98b4bc; }
.layers .lit span { background: #dcdcdc; }
.layers .lit i { background: #ffff30; }
.layers .mark { text-align: right; font-size: 8px; }
.selected { margin-top: auto; width: 140px; background: #ffc850; border: 1px solid #000; border-bottom-width: 2px; font-size: 12px; line-height: 16px; padding-left: 3px; margin-bottom: 6px; }
/* edge of the minimised window behind the results viewer */
.peek { position: absolute; left: 140px; top: 574px; bottom: 0; width: 14px; background: #000; padding-top: 1px; display: flex; flex-direction: column; }
.peek i { height: 17px; background: #ffc850; }
.peek b { height: 34px; margin: 3px 0; background: var(--cream); }
.peek s { height: 24px; background: #b4ffff; }
.peek em { height: 20px; background: var(--te); }
.board { flex: 1; min-width: 0; height: 100%; background: #000; }
.board .dist { font: bold 15px var(--mono); fill: #fff; mix-blend-mode: difference; }
.tools { width: 165px; display: flex; flex-direction: column; background: var(--te); border-left: 3px solid var(--ted); border-right: 2px solid var(--tel); }
.toolgrid { display: grid; grid-template-columns: repeat(4, 1fr); gap: 2px; background: #000; border-top: 2px solid #000; border-left: 1px solid #000; border-bottom: 2px solid #000; }
.toolgrid .btn { height: 38px; padding: 0; }
.toolgrid svg { width: 30px; height: 30px; }
.toolgrid .f { fill: none; stroke: #000; }
.toolgrid .w { fill: none; stroke: #000; stroke-width: 2; }
.btn.red { border-color: #c83030 #981818 #981818 #c83030; }
.overview { flex: 1; width: 100%; min-height: 0; background: #000; border-top: 5px solid var(--te); }
.coords { height: 46px; flex: none; border-top: 2px solid var(--tel); padding: 5px 3px; display: flex; flex-direction: column; line-height: 15px; }
.coords span { font-weight: normal; }

/* command line */
.command { height: 33px; flex: none; display: flex; align-items: stretch; background: var(--cream); border: solid #000; border-width: 1px 0 2px; font-size: 12px; line-height: 13px; }
.command button { width: 32px; display: flex; align-items: center; justify-content: center; border-right: 1px solid #000; }
.command .on { border: 3px solid #60c0a0; }
.command label { width: 47px; padding-left: 2px; align-self: center; white-space: nowrap; }
.command input { width: 173px; border: 3px solid; border-color: #a0a088 #fff #a0a088 #a0a088; outline: 1px solid #000; outline-offset: -1px; }
.command .bang { margin-left: 1px; }
.command p { padding: 2px 3px; white-space: pre; }
.units { margin-left: auto; width: 80px; background: var(--te); border: 3px solid; border-color: var(--tel) var(--ted) var(--ted) var(--tel); display: flex; align-items: center; padding: 0 5px; font-size: 15px; line-height: 18px; }
.units select { flex: 1; min-width: 0; }
.units .nub { background: var(--te); }
.status { height: 31px; flex: none; background: #b4ffff; border: 2px solid #6a9c9c; padding: 2px; display: flex; }
.status i { flex: 1; border: solid; border-width: 0 2px 2px 0; border-color: #5a9898; }

/* task bar */
.taskbar { height: 40px; flex: none; display: flex; background: #101010; color: #fff; font: 13px/38px var(--ui); gap: 9px; }
.start { width: 46px; flex: none; display: flex; align-items: center; justify-content: center; }
.task { width: 74px; flex: none; display: flex; align-items: center; gap: 6px; padding-left: 2px; border-bottom: 3px solid #98d0f0; white-space: nowrap; text-align: left; }
.task svg { width: 22px; height: 24px; }
.task.active { background: #383838; box-shadow: 0 0 0 4px #383838; }
.tray { flex: 1; justify-content: space-between; padding-right: 18px; display: flex; align-items: center; }
.tray time { display: flex; flex-direction: column; align-items: center; font-size: 12px; line-height: 18px; padding: 0 6px; }
.zh { font-size: 15px; }

/* File drop-down */
.filemenu { position: absolute; left: 8px; top: 72px; width: 77px; padding: 0 0 3px; display: flex; flex-direction: column; background: var(--te); border: 2px solid; border-color: var(--tel) var(--ted) var(--ted) var(--tel); font: bold 14px/19px var(--serif); }
.filemenu button { height: 23px; display: flex; align-items: center; text-align: left; padding-left: 1px; border: 2px solid transparent; white-space: pre; }
.filemenu .hot { border-color: var(--tel) var(--ted) var(--ted) var(--tel); }
.filemenu svg { margin-left: auto; margin-right: 3px; }

/* windows */
.window { position: absolute; background: var(--te); display: flex; flex-direction: column; outline: 1px solid #111; }
.window header { height: 31px; flex: none; background: #fff; display: flex; align-items: center; gap: 6px; padding: 0 8px 0 7px; border-bottom: 1px solid #000; }
.window h2 { flex: 1; font: 16px/30px var(--ui); color: #999; white-space: nowrap; }
.list { flex: 1; min-width: 0; overflow: hidden; border: 2px solid; border-color: var(--ted) var(--tel) var(--tel) var(--ted); padding: 3px 4px 3px 3px; white-space: nowrap; }
.list li { height: 18px; line-height: 15px; }
.list .sel { background: #000; background-clip: content-box; padding-bottom: 3px; color: var(--te); }
.scrollbox { display: flex; gap: 4px; flex: 1; }
.vbar { width: 14px; display: flex; flex-direction: column; gap: 1px; border: 1px solid; border-color: var(--ted) var(--tel) var(--tel) var(--ted); }
.vbar svg, .hbar svg { width: 12px; height: 12px; }
.vbar i, .hbar i { flex: 1; border: 2px solid; border-color: var(--tel) var(--ted) var(--ted) var(--tel); }
.hbar { height: 14px; display: flex; gap: 1px; border: 1px solid; border-color: var(--ted) var(--tel) var(--tel) var(--ted); }

.results { left: 148px; top: 305px; width: 495px; height: 738px; border: 1px solid #000; border-top: 0; }
.results header { height: 32px; }
.checkwrap { background: var(--cy); padding: 3px 2px 2px 3px; display: flex; border-bottom: 2px solid #000; }
.check { flex: 1; height: 22px; border: 2px solid; border-color: var(--tel) var(--ted) var(--ted) var(--tel); background: var(--te); font: bold 14px/18px var(--serif); }
.cols { flex: 1; min-height: 0; display: flex; border-bottom: 2px solid #000; }
.lcol { width: 172px; display: flex; flex-direction: column; border-right: 3px solid #000; }
.lhead { height: 30px; display: flex; border-bottom: 1px solid #000; }
.lhead .cell { display: flex; padding: 3px 3px 2px 2px; }
.lhead .it { font-style: italic; font-weight: normal; width: 46px; }
.lhead .cell:last-child .it { width: 37px; }
.lhead strong { flex: 1; background: var(--cy); border: solid #000; border-width: 0 1px; text-align: center; font-style: italic; line-height: 29px; }
.lcol .scrollbox { padding-right: 1px; }
.lcol .hbar { margin: 4px 18px 2px 0; }
.replace { border-top: 1px solid #000; padding: 2px 2px 1px 5px; }
.replace .drop { height: 30px; }
.rcol { flex: 1; min-width: 0; display: flex; flex-direction: column; }
.rhead { height: 33px; display: flex; background: var(--cy); padding: 3px 1px 2px; }
.rhead .cat { width: 207px; font-style: italic; }
.rhead label { line-height: 28px; }
.rhead .drop { width: 59px; margin-left: auto; }
.rcol .scrollbox { padding-right: 1px; }
.rcol .list { padding-right: 0; }
.rcol .list .sel { margin-right: 3px; }
.rcol .hbar { margin: 4px 18px 2px 0; }
.rcol .hbar i { margin-right: 4px; }
.navrow { height: 25px; display: flex; gap: 3px; padding: 0 1px 2px; }
.navrow .btn { width: 45px; }
.navrow .btn:first-child { width: 53px; }
.navrow label { line-height: 24px; padding-left: 2px; }
.navrow input { flex: 1; min-width: 0; margin-left: 3px; border: 2px solid; border-color: var(--ted) var(--tel) var(--tel) var(--ted); padding: 0 0 2px 4px; }
.zoomrow { height: 33px; display: flex; }
.zbox { display: flex; border: 1px solid #000; }
.zbox label { background: var(--cy); border-left: 1px solid #000; line-height: 31px; width: 28px; padding-left: 1px; }
.zbox .az { margin: 1px 2px 1px 4px; width: 117px; }
.green { background: #1ce81c; padding: 1px 2px 1px 6px; display: flex; }
.green .drop { width: 60px; background: #1ce81c; border-color: #90f890 #208020 #208020 #90f890; justify-content: flex-end; }
.green .nub { background: #1ce81c; border-color: #90f890 #208020 #208020 #90f890; }
.show { display: flex; align-items: center; gap: 3px; padding: 0 0 5px 4px; white-space: nowrap; }
.show input { appearance: none; width: 13px; height: 13px; border: 2px solid; border-color: var(--tel) var(--ted) var(--ted) var(--tel); }
.actrow { display: flex; justify-content: flex-end; gap: 4px; height: 34px; padding: 2px; }
.ib { width: 30px; height: 30px; }
.ub { width: 34px; height: 30px; }
.feat { height: 22px; line-height: 20px; text-align: center; border-bottom: 2px solid #000; }
.erf { height: 21px; line-height: 20px; background: var(--cream); padding-left: 2px; border-bottom: 1px solid #000; }
.foot { display: flex; gap: 4px; background: var(--cy); padding: 2px 2px 2px 1px; }
.foot .wide { flex: 1; }

.histo { left: 1367px; top: 414px; width: 467px; }
.histo header { padding-right: 9px; height: 30px; }
.hbody { display: flex; gap: 2px; padding: 4px 5px 0 4px; height: 293px; --te: #9cdcdc; --tel: #c8f4f2; --ted: #5a8c8c; }
.hleft { width: 102px; display: flex; flex-direction: column; background: var(--cy); border: 1px solid #000; padding-bottom: 2px; }
fieldset { margin: 0; padding: 0; border: 0; min-width: 0; display: flex; flex-direction: column; }
.hleft fieldset { border: 1px solid #000; border-bottom-width: 2px; padding-top: 1px; }
.hleft label { height: 27px; display: flex; align-items: center; gap: 6px; padding-left: 6px; }
input[type="radio"] { appearance: none; width: 11px; height: 11px; border: 2px solid; border-color: #c8f4f2 #4a7c7c #4a7c7c #c8f4f2; transform: rotate(45deg); flex: none; }
input[type="radio"]:checked { background: #c80050; border-color: #4a7c7c #e8ffff #e8ffff #4a7c7c; }
.histo .hbtns { display: flex; gap: 4px; padding: 3px 3px 0; }
.hright { flex: 1; min-width: 0; display: flex; flex-direction: column; background: var(--cy); border: 2px solid; border-color: #387c70 var(--tel) var(--tel) #387c70; }
.chart { border: 1px solid #000; border-bottom: 0; display: flex; flex-direction: column; height: 206px; }
.ctitle { align-self: center; height: 23px; margin: 2px 0 0; background: #b4ffff; border: 1px solid #000; box-shadow: 3px 2px #708c8c; font-style: italic; padding: 0 2px; line-height: 24px; }
.bars { flex: 1; display: flex; align-items: flex-end; padding: 0 5px; border-bottom: 3px solid #000; font-weight: normal; }
.bars div { width: 48px; text-align: center; line-height: 17px; display: flex; flex-direction: column; }
.bars i { background: #ff1818; border: 1px solid #000; border-bottom: 0; }
.bars .zero { color: #e02020; }
.ranges { display: flex; margin: 2px 5px 8px; background: #ff1818; border: solid #000; border-width: 1px 1px 1px 0; width: 337px; font-weight: normal; height: 29px; }
.ranges div { width: 48px; border-left: 1px solid #000; padding: 2px 4px 0 6px; line-height: 15px; }
.ranges b { display: block; text-align: right; font-weight: normal; line-height: 13px; }
.hbar.cy { background: #84b8b8; }
.hbar.cy i { flex: none; width: 71px; background: #9cdcdc; margin-right: auto; }
.lower { flex: 1; display: flex; border: solid #000; border-width: 1px 0 2px 1px; }
.lower .scrollbox { flex: none; width: 93px; }
.lower .list { padding-right: 3px; }
.res { flex: 1; min-width: 0; border-left: 1px solid #000; border-right: 2px solid #000; display: flex; flex-direction: column; padding: 2px 2px 2px; }
.res label { text-align: center; }
.res output { font-weight: normal; padding: 5px 4px 2px; line-height: 16px; }
.res input { appearance: none; width: 100%; height: 15px; background: #84b8b8; border: 2px solid; border-color: var(--ted) var(--tel) var(--tel) var(--ted); }
.res input::-webkit-slider-thumb { appearance: none; width: 29px; height: 11px; background: linear-gradient(90deg, #9cdcdc 13px, #5a8c8c 13px 14px, #c8f4f2 14px 15px, #9cdcdc 15px); border: 1px solid; border-color: #c8f4f2 #5a8c8c #5a8c8c #c8f4f2; }
.sash { height: 5px; border-bottom: 1px solid var(--ted); display: flex; justify-content: flex-end; }
.sash i { width: 9px; height: 9px; margin-right: 12px; flex: none; background: var(--te); border: 2px solid; border-color: var(--tel) var(--ted) var(--ted) var(--tel); }
.map { margin: 1px 5px 1px 4px; height: 166px; border: 2px solid #000; outline: 1px solid var(--tel); display: flex; align-items: center; justify-content: center; }
.mrow { display: flex; gap: 4px; padding: 0 6px 0 5px; height: 42px; }
.mrow .tall { width: 30px; margin: 2px 0; }
.mrow .msg { flex: 1; background: var(--cy); border: 1px solid #000; line-height: 40px; padding-left: 2px; }
.mrow .sq { width: 38px; margin: 2px 0; }
.hfoot { margin-top: 3px; border-top: 1px solid #000; background: var(--cy); padding: 2px; display: flex; }
.hfoot .btn { flex: 1; height: 24px; }

.measure { right: 0; top: 246px; width: 184px; }
.measure header { padding-right: 9px; }
.measure legend { width: 100%; padding: 0; text-align: center; line-height: 15px; background: var(--cy); border: 1px solid #000; border-top: 0; }
.measure label { height: 29px; display: flex; align-items: center; gap: 6px; background: var(--cy); border: solid #000; border-width: 0 1px 2px 2px; padding-left: 6px; white-space: nowrap; }
.mfoot { margin-top: 30px; border: 1px solid #000; padding: 2px; display: flex; }
.mfoot .btn { flex: 1; height: 24px; }

.ime { position: absolute; right: 3px; bottom: 92px; width: 162px; height: 24px; background: #fff; display: flex; align-items: center; justify-content: space-between; padding-right: 4px; }
.ime span { font: bold 15px/24px "Noto Sans CJK SC", sans-serif; color: #454a66; }
```
